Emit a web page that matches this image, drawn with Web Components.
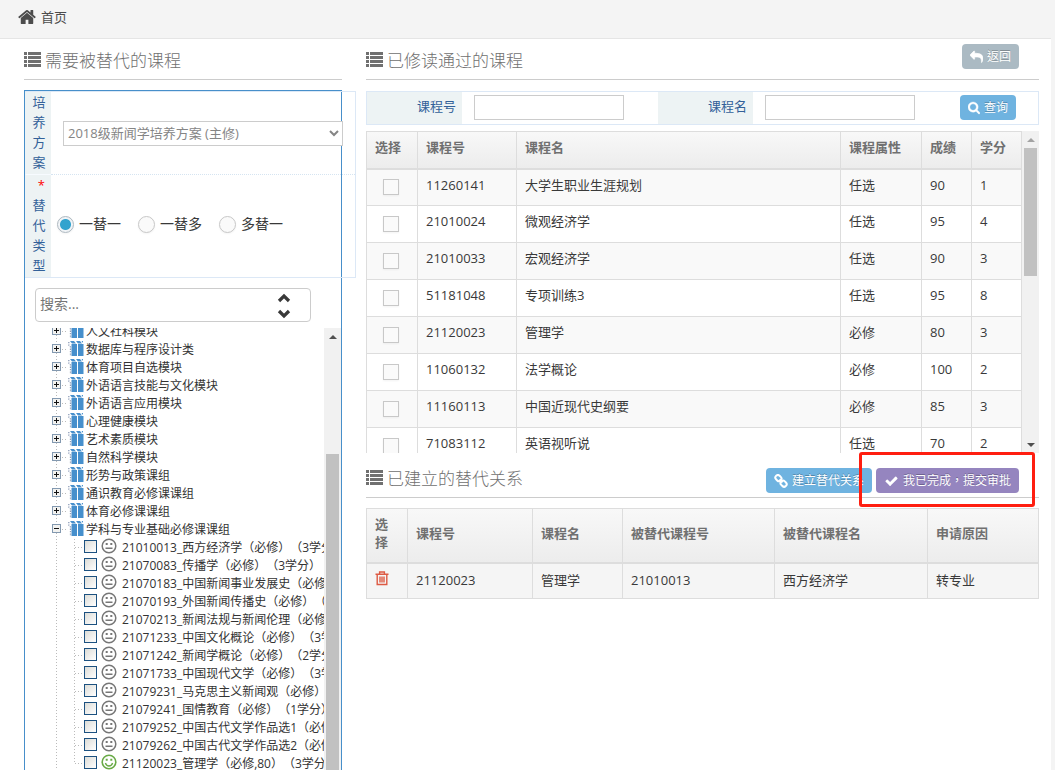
<!DOCTYPE html>
<html lang="zh-CN">
<head>
<meta charset="utf-8">
<title>课程替代</title>
<style>
  body { margin: 0; background: #f4f4f4; color: #393939; font: 13px/18px "Open Sans", "Noto Sans CJK SC", sans-serif; text-spacing-trim: space-all; }
</style>
</head>
<body>
<course-app></course-app>

<template id="course-app">
  <style>
    :host { display: flex; flex-direction: column; height: 100vh; overflow: hidden; }
    main { flex: 1; min-height: 0; box-sizing: border-box; margin-right: 4px; padding: 0 12px 0 24px; background: #fff; display: grid; grid-template-columns: 318fr 673fr; gap: 24px; }
    .left, .right { min-width: 0; min-height: 0; display: flex; flex-direction: column; }
    .panel { flex: 1; min-height: 0; margin-top: 10px; display: flex; flex-direction: column; border: solid #478fca; border-width: 1px 1px 0; }
    plan-form { margin-right: -15px; }
    query-form { margin-top: 11px; }
    passed-courses { margin-top: 6px; }
    .relations { margin-top: 4px; }
    relation-table { margin-top: 10px; }
    .actions { position: relative; display: flex; gap: 4px; }
    .mark { position: absolute; top: -16px; right: -16px; box-sizing: border-box; width: 176px; height: 55px; border: 3px solid #ff1e10; border-radius: 3px; pointer-events: none; }
  </style>
  <top-bar></top-bar>
  <main>
    <div class="left">
      <section-title>需要被替代的课程</section-title>
      <div class="panel">
        <plan-form></plan-form>
        <tree-search></tree-search>
        <course-tree></course-tree>
      </div>
    </div>
    <div class="right">
      <section-title>已修读通过的课程<action-button slot="actions" icon="reply" tone="grey">返回</action-button></section-title>
      <query-form></query-form>
      <passed-courses></passed-courses>
      <section-title class="relations" low>已建立的替代关系<div class="actions" slot="actions"><action-button icon="link" tone="blue">建立替代关系</action-button><action-button icon="check" tone="purple">我已完成，提交审批</action-button><div class="mark"></div></div></section-title>
      <relation-table></relation-table>
    </div>
  </main>
</template>

<template id="top-bar">
  <style>
    :host { display: block; margin-right: 4px; border-bottom: 1px solid #e5e5e5; background: #f4f4f4; }
    nav { height: 38px; padding: 0 18px; display: flex; align-items: center; }
    a { display: flex; align-items: center; gap: 5px; margin-bottom: 5px; color: #4c4c4c; text-decoration: none; }
    ui-icon { width: 18px; height: 18px; color: #4c4c4c; }
  </style>
  <nav><a href="#"><ui-icon name="home"></ui-icon>首页</a></nav>
</template>

<template id="section-title">
  <style>
    :host { display: flex; justify-content: space-between; height: 40px; border-bottom: 1px solid #ccc; }
    h4 { margin: 10px 0 0; height: 24px; font-size: 17px; line-height: 24px; font-weight: 300; color: #707070; display: flex; align-items: center; gap: 3px; white-space: nowrap; }
    ui-icon { width: 18px; height: 18px; margin-bottom: 2px; }
    .side { padding: 5px 20px 0 0; }
    :host([low]) .side { padding-top: 11px; }
  </style>
  <h4><ui-icon name="list"></ui-icon><span><slot></slot></span></h4>
  <div class="side"><slot name="actions"></slot></div>
</template>

<template id="plan-form">
  <style>
    :host { display: block; }
    table { width: 100%; border-collapse: separate; border-spacing: 0; border: 1px solid #dce8f6; border-left: 0; }
    th, td { padding: 0; font-weight: 400; }
    th { width: 14px; padding: 0 5px 2px 6px; border-left: 1px solid #edf3f4; background: #edf3f4; color: #336199; line-height: 20px; vertical-align: top; word-break: break-all; white-space: normal; }
    th label { display: block; width: 14px; }
    tr + tr th { border-top: 1px solid #f7fbff; }
    tr + tr td { border-top: 1px dotted #d5e4f1; }
    td { vertical-align: middle; }
    select { display: block; box-sizing: border-box; width: calc(100% - 24px); height: 25px; margin: 0 12px; padding: 0; border: 1px solid #ccc; border-radius: 0; background: #fff; color: #858585; font: inherit; }
    .star { color: red; display: block; text-align: right; padding-right: 1px; box-sizing: border-box; }
    .radios { display: flex; gap: 17px; padding-left: 6px; margin-top: -4px; }
    .radios label { display: flex; align-items: center; gap: 5px; font-size: 14px; line-height: 20px; white-space: nowrap; }
    input { appearance: none; box-sizing: border-box; width: 17px; height: 17px; margin: 0; border: 1px solid #c8c8c8; border-radius: 50%; background: #fafafa; box-shadow: 0 1px 2px rgba(0,0,0,.05); }
    input:checked { border-color: #adb8c0; background: radial-gradient(circle, #32a3ce 0 5px, #f1f4f7 6px); }
  </style>
  <table>
    <tr><th scope="row"><label for="plan">培养方案</label></th><td><select id="plan"><option>2018级新闻学培养方案 (主修)</option></select></td></tr>
    <tr><th scope="row" id="kind"><label for="one"><span class="star">*</span>替代类型</label></th><td><div class="radios" role="radiogroup" aria-labelledby="kind"><label><input id="one" type="radio" name="t" checked>一替一</label><label><input type="radio" name="t">一替多</label><label><input type="radio" name="t">多替一</label></div></td></tr>
  </table>
</template>

<template id="tree-search">
  <style>
    :host { display: flex; box-sizing: border-box; height: 34px; margin: 10px 30px 6px 10px; border: 1px solid #ccc; border-radius: 4px; background: #fff; }
    input { flex: 1; min-width: 0; margin: 0; padding: 0 4px 2px; border: 0; background: none; font: inherit; font-size: 14px; color: #393939; outline: 0; }
    input::placeholder { color: #757575; }
    .steps { display: flex; flex-direction: column; justify-content: space-between; padding: 2px 19px 0 0; }
    button { margin: 0; padding: 0; border: 0; background: none; color: #393939; width: 14px; height: 14px; }
    ui-icon { width: 14px; height: 14px; }
  </style>
  <input type="text" placeholder="搜索..." aria-label="搜索">
  <div class="steps"><button aria-label="上一个"><ui-icon name="up"></ui-icon></button><button aria-label="下一个"><ui-icon name="down"></ui-icon></button></div>
</template>

<template id="scroll-rail">
  <style>
    :host { display: flex; flex-direction: column; width: 17px; flex: none; background: #f1f1f1; color: #505050; }
    .arrow { height: 17px; display: flex; align-items: center; justify-content: center; }
    .arrow svg { width: 8px; height: 4px; }
    .lane { flex: 1; min-height: 0; display: flex; flex-direction: column; }
    .thumb { margin: 0 2px; background: #c1c1c1; }
  </style>
  <div class="arrow"><svg viewBox="0 0 8 4"><path d="M0 4 4 0l4 4z" fill="currentColor"/></svg></div>
  <div class="lane"><div class="space"></div><div class="thumb"></div></div>
  <div class="arrow end"><svg viewBox="0 0 8 4"><path d="M0 0l4 4 4-4z" fill="currentColor"/></svg></div>
</template>

<template id="query-form">
  <style>
    :host { display: block; border: 1px solid #dce8f6; }
    form { display: grid; grid-template-columns: 95px 196px 95px 1fr auto; height: 32px; align-items: start; }
    label { box-sizing: border-box; height: 32px; padding: 5px 6px 9px 0; text-align: right; background: #edf3f4; color: #336199; }
    input { box-sizing: border-box; width: 150px; height: 25px; margin: 3px 12px 0; padding: 0 4px; border: 1px solid #ccc; background: #fff; font: inherit; }
    action-button { margin: 3px 22px 0 0; }
  </style>
  <form><label for="no">课程号</label><input id="no" type="text"><label for="nm">课程名</label><input id="nm" type="text"><action-button icon="search" tone="blue">查询</action-button></form>
</template>

<script>
const ICONS = {
  home: ['0 0 1664 1664', '<path fill="currentColor" transform="translate(0 -64)" d="M1408 992v480q0 26-19 45t-45 19h-384v-384h-256v384h-384q-26 0-45-19t-19-45v-480q0-1 .5-3t.5-3l575-474 575 474q1 2 1 6zm223-69l-62 74q-8 9-21 11h-3q-13 0-21-7l-692-577-692 577q-12 8-24 7-13-2-21-11l-62-74q-8-10-7-23.5t11-21.5l719-599q32-26 76-26t76 26l244 204v-195q0-14 9-23t23-9h192q14 0 23 9t9 23v408l219 182q10 8 11 21.5t-7 23.5z"/>'],
  list: ['0 0 18 18', '<path fill="currentColor" d="M0 1h3v3H0zM0 5h3v3H0zM0 9h3v3H0zM0 13h3v3H0zM4 1h13v3H4zM4 5h13v3H4zM4 9h13v3H4zM4 13h13v3H4z"/>'],
  reply: ['0 0 1792 1792', '<path fill="currentColor" transform="matrix(-1 0 0 1 1792 0)" d="M1792 640q0 26-19 45l-512 512q-19 19-45 19t-45-19-19-45v-256h-224q-98 0-175.5 6t-154 21.5-133 42.5-105.5 69.5-80 101-48.5 138.5-17.5 181q0 55 5 123 0 6 2.5 23.5t2.5 26.5q0 15-8.5 25t-23.5 10q-16 0-28-17-7-9-13-22t-13.5-30-10.5-24q-127-285-127-451 0-199 53-333 162-403 875-403h224v-256q0-26 19-45t45-19 45 19l512 512q19 19 19 45z" stroke="currentColor" stroke-width="90"/>'],
  search: ['64 128 1664 1664', '<path fill="currentColor" stroke="currentColor" stroke-width="50" d="M1216 832q0-185-131.5-316.5t-316.5-131.5-316.5 131.5-131.5 316.5 131.5 316.5 316.5 131.5 316.5-131.5 131.5-316.5zm512 832q0 52-38 90t-90 38q-54 0-90-38l-343-342q-179 124-399 124-143 0-273.5-55.5t-225-150-150-225-55.5-273.5 55.5-273.5 150-225 225-150 273.5-55.5 273.5 55.5 225 150 150 225 55.5 273.5q0 220-124 399l343 343q37 37 37 90z"/>'],
  check: ['0 0 1792 1792', '<path fill="currentColor" d="M1671 566q0 40-28 68l-724 724-136 136q-28 28-68 28t-68-28l-136-136-362-362q-28-28-28-68t28-68l136-136q28-28 68-28t68 28l294 295 656-657q28-28 68-28t68 28l136 136q28 28 28 68z"/>'],
  link: ['0 0 14 14', '<g fill="none" stroke="currentColor" stroke-width="2"><rect x="1.2" y="1.6" width="6.4" height="5" rx="2.4" transform="rotate(45 4.4 4.1)"/><rect x="6.4" y="7.2" width="6.4" height="5" rx="2.4" transform="rotate(45 9.6 9.7)"/><path d="M5.6 5.4l3 3"/></g>'],
  up: ['0 0 14 14', '<path fill="none" stroke="currentColor" stroke-width="3.2" d="M2 10l5-5 5 5"/>'],
  down: ['0 0 14 14', '<path fill="none" stroke="currentColor" stroke-width="3.2" d="M2 4l5 5 5-5"/>'],
  meh: ['0 0 16 16', '<circle cx="8" cy="8" r="6.8" fill="none" stroke="currentColor" stroke-width="1.5"/><path fill="currentColor" d="M4.7 5h2v2h-2zM9.3 5h2v2h-2zM4.5 9.6h7v1.3h-7z"/>'],
  smile: ['0 0 16 16', '<circle cx="8" cy="8" r="6.8" fill="none" stroke="currentColor" stroke-width="1.6"/><path fill="currentColor" d="M4.7 4.8h2v2h-2zM9.3 4.8h2v2h-2z"/><path fill="none" stroke="currentColor" stroke-width="1.4" d="M4.4 9q1 3 3.6 3t3.6-3"/>'],
  trash: ['0 0 14 15', '<path fill="none" stroke="currentColor" stroke-width="1.4" d="M.5 3.2h13M4.6 3V1h4.8v2M2.2 3.2v10.3h9.6V3.2M5 5.5v6M7 5.5v6M9 5.5v6"/>'],
  book: ['0 0 16 15', '<path fill="#468fcc" d="M3.500 3h5.500v12H3.500zM10 3h5.500v12H10zM2 0h4l2 2.400H4zM8 0h4l2 2.400h-4zM13.500 0H15v2z"/><path fill="none" stroke="#8d9cb8" stroke-width="1.300" stroke-dasharray="1.300 1.100" d="M.8 1v3l1.700 2v9"/>'],
  plus: ['0 0 9 9', '<rect x=".5" y=".5" width="8" height="8" fill="#f2f2f0" stroke="#8399b0"/><path stroke="#111" d="M2 4.500h5M4.500 2v5"/>'],
  minus: ['0 0 9 9', '<rect x=".5" y=".5" width="8" height="8" fill="#f2f2f0" stroke="#8399b0"/><path stroke="#111" d="M2 4.500h5"/>']
};

function define(tag, setup) {
  customElements.define(tag, class extends HTMLElement {
    connectedCallback() {
      if (this.shadowRoot) return;
      const root = this.attachShadow({ mode: 'open' });
      const tpl = document.getElementById(tag);
      if (tpl) root.append(tpl.content.cloneNode(true));
      if (setup) setup(root, this);
    }
  });
}

define('ui-icon', (root, host) => {
  const [box, body] = ICONS[host.getAttribute('name')];
  root.innerHTML = `<style>:host{display:block;flex:none}svg{display:block;width:100%;height:100%}</style><svg viewBox="${box}" aria-hidden="true">${body}</svg>`;
});

define('action-button', (root, host) => {
  root.innerHTML = `<style>
    :host { display: block; }
    button { display: flex; align-items: center; gap: 4px; box-sizing: border-box; height: 25px; margin: 0; padding: 0 8px; border: 0; border-radius: 4px; color: #fff; font: 12px/18px "Open Sans", "Noto Sans CJK TC", sans-serif; -webkit-locale: "zh-TW"; text-shadow: 0 -1px 0 rgba(0,0,0,.25); white-space: nowrap; }
    ui-icon { width: 14px; height: 14px; }
    ui-icon[name=reply] { width: 13px; }
    ui-icon[name=search] { width: 12px; }
    ui-icon[name=check] { width: 15px; }
    .grey { background: #abbac3; } .blue { background: #6fb3e0; } .purple { background: #9585bf; }
  </style><button type="button" class="${host.getAttribute('tone')}"><ui-icon name="${host.getAttribute('icon')}"></ui-icon><span><slot></slot></span></button>`;
});

define('scroll-rail', (root, host) => {
  root.querySelector('.space').style.flex = host.getAttribute('before') + ' 0 0';
  root.querySelector('.thumb').style.flex = host.getAttribute('size') + ' 0 0';
  const rest = document.createElement('div');
  rest.style.flex = host.getAttribute('after') + ' 0 0';
  root.querySelector('.lane').append(rest);
  if (host.hasAttribute('at-top')) root.querySelector('.arrow').style.color = '#a3a3a3';
  if (host.hasAttribute('open-end')) root.querySelector('.end').remove();
});

define('top-bar');
define('section-title');
define('plan-form');
define('tree-search');
define('query-form');

const GROUPS = ['人文社科模块', '数据库与程序设计类', '体育项目自选模块', '外语语言技能与文化模块', '外语语言应用模块', '心理健康模块', '艺术素质模块', '自然科学模块', '形势与政策课组', '通识教育必修课课组', '体育必修课课组', '学科与专业基础必修课课组'];
const LEAVES = ['21010013_西方经济学（必修）（3学分）', '21070083_传播学（必修）（3学分）', '21070183_中国新闻事业发展史（必修）（3学分）', '21070193_外国新闻传播史（必修）（3学分）', '21070213_新闻法规与新闻伦理（必修）（3学分）', '21071233_中国文化概论（必修）（3学分）', '21071242_新闻学概论（必修）（2学分）', '21071733_中国现代文学（必修）（3学分）', '21079231_马克思主义新闻观（必修）（1学分）', '21079241_国情教育（必修）（1学分）', '21079252_中国古代文学作品选1（必修）（2学分）', '21079262_中国古代文学作品选2（必修）（2学分）', '21120023_管理学（必修,80）（3学分）'];

define('course-tree', root => {
  const groups = GROUPS.map((name, i) => {
    const open = i === GROUPS.length - 1;
    const kids = open ? `<ul class="kids">${LEAVES.map((t, n) => `<li><label><span class="dots"></span><input type="checkbox"><ui-icon class="face ${n === 12 ? 'ok' : ''}" name="${n === 12 ? 'smile' : 'meh'}"></ui-icon><span class="text">${t}</span></label></li>`).join('')}</ul>` : '';
    return `<li><div class="row"><ui-icon class="switch" name="${open ? 'minus' : 'plus'}"></ui-icon><span class="dots"></span><ui-icon class="book" name="book"></ui-icon><span class="text">${name}</span></div>${kids}</li>`;
  }).join('');
  root.innerHTML = `<style>
    :host { display: flex; flex: 1; min-height: 0; font-size: 12px; color: #333; }
    .view { flex: 1; min-width: 0; overflow: hidden; }
    ul { list-style: none; margin: 0; padding: 0; }
    .tree { margin: -5px 0 0 27px; background: repeating-linear-gradient(#bbb 0 1px, transparent 1px 3px) 4px 0 / 1px 100% no-repeat; }
    .row, label { display: flex; align-items: center; height: 18px; white-space: nowrap; }
    .switch { width: 9px; height: 9px; margin-bottom: 3px; }
    .dots { flex: none; width: 5px; height: 1px; margin: 0 1px 2px; background: repeating-linear-gradient(90deg, #bbb 0 1px, transparent 1px 3px); }
    .book { width: 16px; height: 15px; margin: 0 2px 3px 0; }
    .kids { margin-left: 22px; background: repeating-linear-gradient(#bbb 0 1px, transparent 1px 3px) 0 0 / 1px calc(100% - 9px) no-repeat; }
    .kids .dots { width: 8px; }
    input { appearance: none; flex: none; box-sizing: border-box; width: 13px; height: 13px; margin: 0 4px 3px 0; border: 1px solid #1c5180; background: linear-gradient(135deg, #dcdcd7, #fff); }
    .face { width: 16px; height: 16px; margin: 0 5px 4px 0; color: #777; }
    .ok { color: #69aa46; }
  </style><div class="view"><ul class="tree">${groups}</ul></div><scroll-rail before="109" size="316" after="0" open-end></scroll-rail>`;
});

const TABLE_CSS = `
  table { width: 100%; table-layout: fixed; border-collapse: collapse; }
  th, td { padding: 8px; border: 1px solid #ddd; text-align: left; line-height: 18px; vertical-align: top; }
  th { padding: 6px 8px 11px; color: #707070; font-weight: 700; border-bottom-width: 2px; vertical-align: middle; }
  thead tr { background: linear-gradient(#f8f8f8, #ececec); }
`;
const PASSED = [['11260141', '大学生职业生涯规划', '任选', 90, 1], ['21010024', '微观经济学', '任选', 95, 4], ['21010033', '宏观经济学', '任选', 90, 3], ['51181048', '专项训练3', '任选', 95, 8], ['21120023', '管理学', '必修', 80, 3], ['11060132', '法学概论', '必修', 100, 2], ['11160113', '中国近现代史纲要', '必修', 85, 3], ['71083112', '英语视听说', '任选', 70, 2]];

define('passed-courses', root => {
  root.innerHTML = `<style>
    :host { display: flex; height: 322px; overflow: hidden; flex: none; }
    .view { flex: 1; min-width: 0; overflow: hidden; }
    ${TABLE_CSS}
    tr { height: 37px; }
    td { padding: 6px 8px 0; }
    td:first-child { padding: 0 2px 0 0; text-align: center; vertical-align: middle; }
    tbody tr:nth-child(odd) { background: #f9f9f9; }
    input { appearance: none; display: block; box-sizing: border-box; width: 16px; height: 16px; margin: 0 auto; border: 1px solid #c8c8c8; background: #fafafa; box-shadow: 0 1px 2px rgba(0,0,0,.05); }
  </style><div class="view"><table>
    <colgroup><col style="width:51px"><col style="width:99px"><col><col style="width:81px"><col style="width:50px"><col style="width:50px"></colgroup>
    <thead><tr><th>选择</th><th>课程号</th><th>课程名</th><th>课程属性</th><th>成绩</th><th>学分</th></tr></thead>
    <tbody>${PASSED.map(r => `<tr><td><input type="checkbox" aria-label="${r[1]}"></td>${r.map(c => `<td>${c}</td>`).join('')}</tr>`).join('')}</tbody>
  </table></div><scroll-rail before="0" size="128" after="160" at-top></scroll-rail>`;
});

define('relation-table', root => {
  root.innerHTML = `<style>
    :host { display: block; }
    ${TABLE_CSS}
    td { padding: 7px 8px 9px; }
    tbody tr { background: #f5f5f5; }
    button { display: block; margin: 0; padding: 0; border: 0; background: none; color: #dd5a43; }
    ui-icon { width: 14px; height: 15px; }
  </style><table>
    <colgroup><col style="width:41px"><col style="width:125px"><col style="width:90px"><col style="width:152px"><col style="width:153px"><col></colgroup>
    <thead><tr><th>选<br>择</th><th>课程号</th><th>课程名</th><th>被替代课程号</th><th>被替代课程名</th><th>申请原因</th></tr></thead>
    <tbody><tr><td><button type="button" aria-label="删除"><ui-icon name="trash"></ui-icon></button></td><td>21120023</td><td>管理学</td><td>21010013</td><td>西方经济学</td><td>转专业</td></tr></tbody>
  </table>`;
});

define('course-app');
</script>
</body>
</html>
